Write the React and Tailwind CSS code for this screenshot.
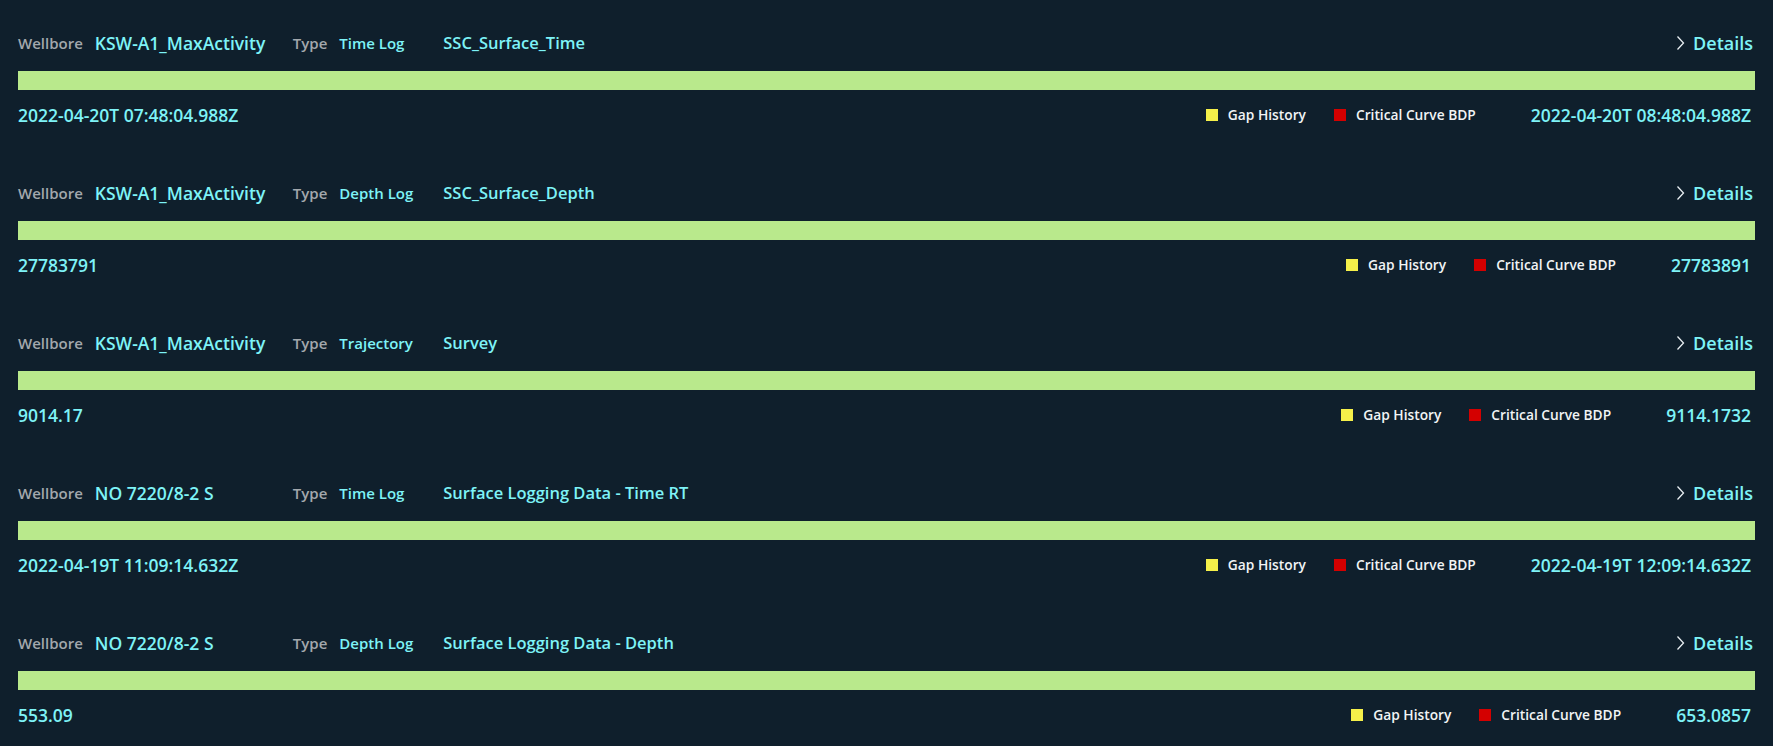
import React from "react";

const rows = [
  { wellbore: "KSW-A1_MaxActivity", type: "Time Log", name: "SSC_Surface_Time", start: "2022-04-20T 07:48:04.988Z", end: "2022-04-20T 08:48:04.988Z" },
  { wellbore: "KSW-A1_MaxActivity", type: "Depth Log", name: "SSC_Surface_Depth", start: "27783791", end: "27783891" },
  { wellbore: "KSW-A1_MaxActivity", type: "Trajectory", name: "Survey", start: "9014.17", end: "9114.1732" },
  { wellbore: "NO 7220/8-2 S", type: "Time Log", name: "Surface Logging Data - Time RT", start: "2022-04-19T 11:09:14.632Z", end: "2022-04-19T 12:09:14.632Z" },
  { wellbore: "NO 7220/8-2 S", type: "Depth Log", name: "Surface Logging Data - Depth", start: "553.09", end: "653.0857" },
];

function Row({ r }) {
  return (
    <div className="flex flex-col">
      <div className="flex h-6 items-center">
        <span className="text-[15px] font-semibold text-[#a3a8ad]">Wellbore</span>
        <span className="ml-3 w-[198px] text-[17.5px] font-semibold text-[#7ef3f7]">{r.wellbore}</span>
        <span className="text-[15px] font-semibold text-[#a3a8ad]">Type</span>
        <span className="ml-3 w-[104px] text-[15px] font-semibold text-[#7ef3f7]">{r.type}</span>
        <span className="text-[16.5px] font-semibold text-[#7ef3f7]">{r.name}</span>
        <div className="ml-auto mr-[2px] flex items-center gap-2">
          <svg width="9" height="16" viewBox="0 0 9 16" fill="none">
            <path d="M1.5 1.5 L7.5 8 L1.5 14.5" stroke="#e8eef2" strokeWidth="1.3" />
          </svg>
          <span className="text-[18px] font-semibold text-[#7ef3f7]">Details</span>
        </div>
      </div>
      <div className="mt-4 h-[19px] w-full bg-[#b9e98c]" />
      <div className="mt-[13px] flex h-6 items-center">
        <span className="text-[17.5px] font-semibold text-[#7ef3f7]">{r.start}</span>
        <div className="ml-auto mr-[4px] flex items-center">
          <span className="h-3 w-3 bg-[#f5f04a]" />
          <span className="ml-[10px] text-[13.75px] font-semibold text-[#f2f4f5]">Gap History</span>
          <span className="ml-7 h-3 w-3 bg-[#d40000]" />
          <span className="ml-[10px] text-[13.75px] font-semibold text-[#f2f4f5]">Critical Curve BDP</span>
          <span className="ml-[55px] text-[17.5px] font-semibold text-[#7ef3f7]">{r.end}</span>
        </div>
      </div>
    </div>
  );
}

export default function App() {
  return (
    <div
      className="min-h-screen w-full bg-[#0f1f2c] px-[18px] pt-[31px]"
      style={{ fontFamily: '"Open Sans", "Noto Sans", sans-serif' }}
    >
      <div className="flex flex-col gap-[54px]">
        {rows.map((r, i) => (
          <Row key={i} r={r} />
        ))}
      </div>
    </div>
  );
}
